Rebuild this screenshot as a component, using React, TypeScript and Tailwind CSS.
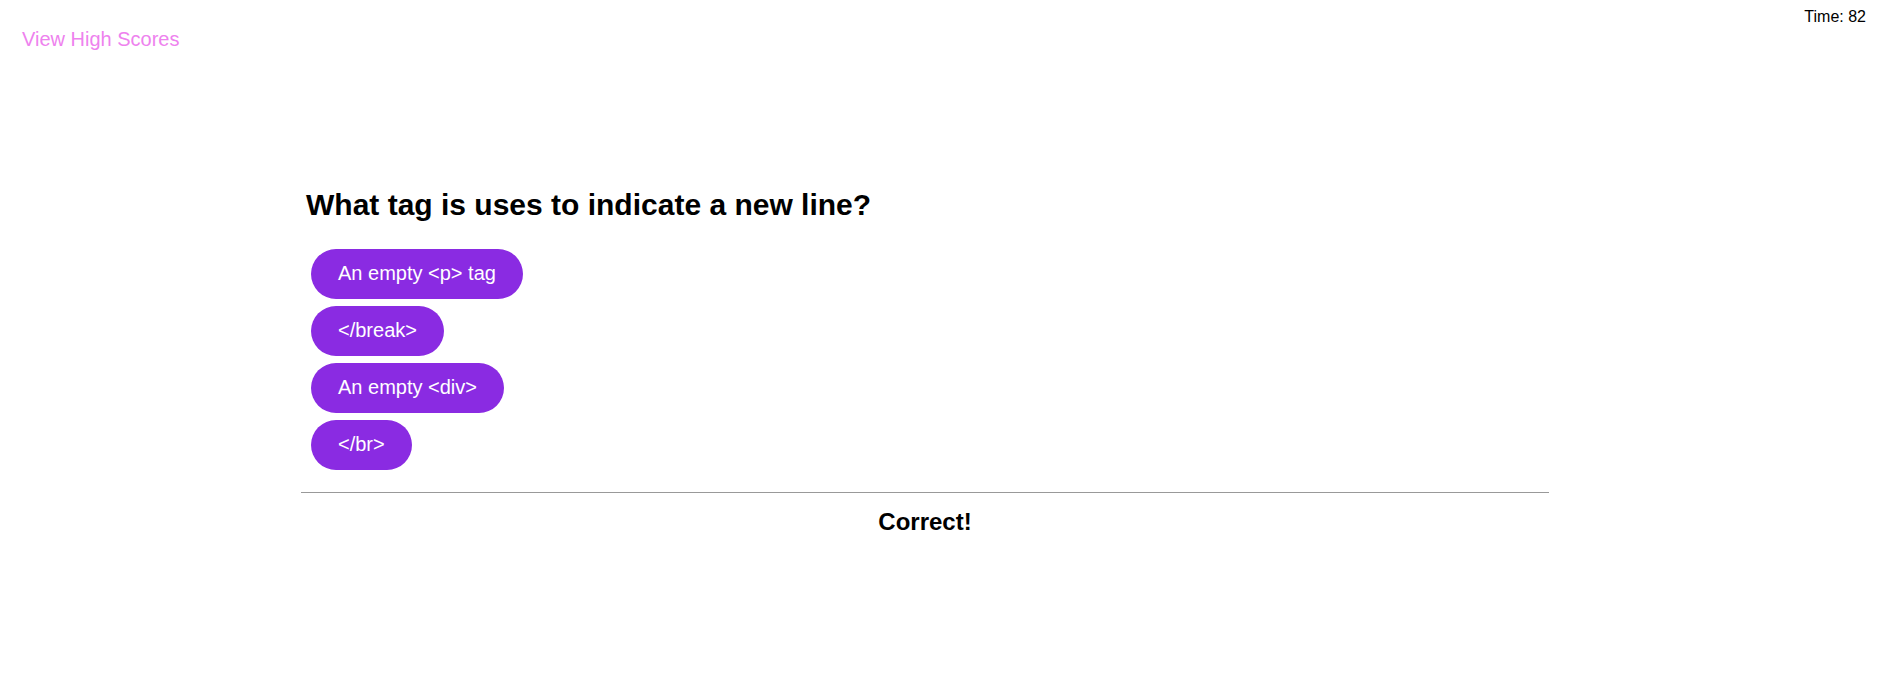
const answers = ["An empty <p> tag", "</break>", "An empty <div>", "</br>"];

export default function App() {
  return (
    <div className="min-h-[698px] bg-white font-['Liberation_Sans',Arial,sans-serif] leading-[1.15] text-black">
      {/* Header */}
      <header className="flex items-start justify-between">
        <a href="#" className="ml-[22px] mt-[28px] text-[20px] leading-[1.15] text-[#ee82ee]">
          View High Scores
        </a>
        <div className="mr-[15px] mt-[8px] text-base leading-[1.15]">Time: 82</div>
      </header>

      {/* Question card */}
      <main className="ml-[301px] mt-[137px] w-[1248px]">
        <h2 className="pl-[5px] text-[30px] font-bold leading-[1.15]">
          What tag is uses to indicate a new line?
        </h2>

        <div className="mt-[26px] flex flex-col items-start gap-[7px] pl-[10px]">
          {answers.map((answer) => (
            <button
              key={answer}
              className="flex h-[50px] items-center rounded-full bg-[#8a2be2] px-[27px] text-[20px] leading-[1.15] text-white"
            >
              {answer}
            </button>
          ))}
        </div>

        <hr className="mt-[22px] border-t border-[#999999]" />

        <p className="mt-[15px] text-center text-2xl font-bold leading-[1.15]">Correct!</p>
      </main>
    </div>
  );
}
